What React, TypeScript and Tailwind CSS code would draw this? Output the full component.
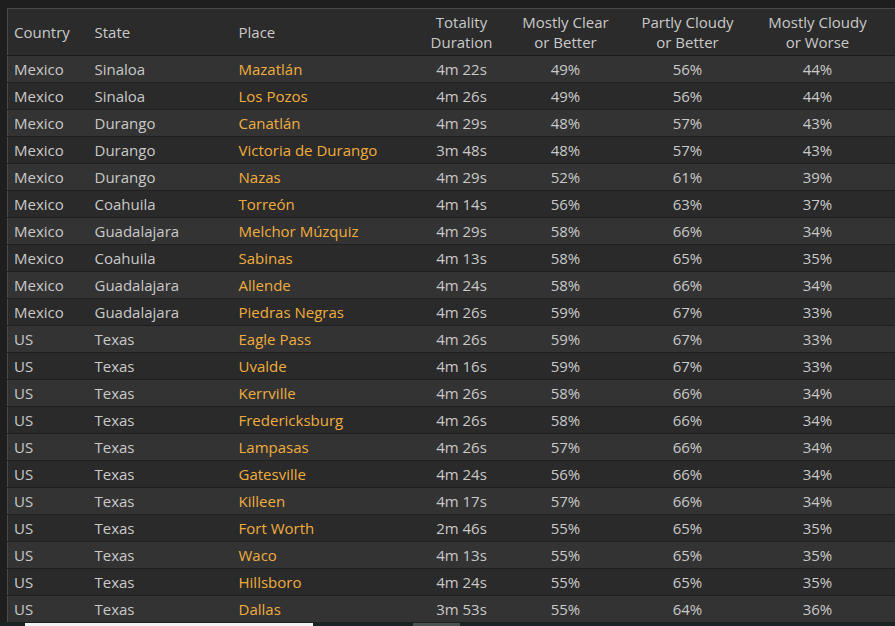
const rows: [string, string, string, string, string, string, string][] = [
  ["Mexico", "Sinaloa", "Mazatlán", "4m 22s", "49%", "56%", "44%"],
  ["Mexico", "Sinaloa", "Los Pozos", "4m 26s", "49%", "56%", "44%"],
  ["Mexico", "Durango", "Canatlán", "4m 29s", "48%", "57%", "43%"],
  ["Mexico", "Durango", "Victoria de Durango", "3m 48s", "48%", "57%", "43%"],
  ["Mexico", "Durango", "Nazas", "4m 29s", "52%", "61%", "39%"],
  ["Mexico", "Coahuila", "Torreón", "4m 14s", "56%", "63%", "37%"],
  ["Mexico", "Guadalajara", "Melchor Múzquiz", "4m 29s", "58%", "66%", "34%"],
  ["Mexico", "Coahuila", "Sabinas", "4m 13s", "58%", "65%", "35%"],
  ["Mexico", "Guadalajara", "Allende", "4m 24s", "58%", "66%", "34%"],
  ["Mexico", "Guadalajara", "Piedras Negras", "4m 26s", "59%", "67%", "33%"],
  ["US", "Texas", "Eagle Pass", "4m 26s", "59%", "67%", "33%"],
  ["US", "Texas", "Uvalde", "4m 16s", "59%", "67%", "33%"],
  ["US", "Texas", "Kerrville", "4m 26s", "58%", "66%", "34%"],
  ["US", "Texas", "Fredericksburg", "4m 26s", "58%", "66%", "34%"],
  ["US", "Texas", "Lampasas", "4m 26s", "57%", "66%", "34%"],
  ["US", "Texas", "Gatesville", "4m 24s", "56%", "66%", "34%"],
  ["US", "Texas", "Killeen", "4m 17s", "57%", "66%", "34%"],
  ["US", "Texas", "Fort Worth", "2m 46s", "55%", "65%", "35%"],
  ["US", "Texas", "Waco", "4m 13s", "55%", "65%", "35%"],
  ["US", "Texas", "Hillsboro", "4m 24s", "55%", "65%", "35%"],
  ["US", "Texas", "Dallas", "3m 53s", "55%", "64%", "36%"],
];

function App() {
  return (
    <div className="w-[895px] h-[626px] overflow-hidden bg-[#1e1e1e] font-['Open_Sans',sans-serif] text-[15px] text-[#c9c9c9]">
      <div className="pt-2 pl-[7px]">
        <table className="table-fixed w-[960px] border-collapse border-l border-t border-[#4a4a4a] bg-[#2b2b2b]">
          <colgroup>
            <col className="w-[81px]" />
            <col className="w-[144px]" />
            <col className="w-[177px]" />
            <col className="w-[104px]" />
            <col className="w-[104px]" />
            <col className="w-[140px]" />
            <col className="w-[120px]" />
            <col />
          </colgroup>
          <thead>
            <tr className="h-[47px] border-b border-[#1c1c1c] leading-5">
              <th className="text-left font-normal pl-[6px]">Country</th>
              <th className="text-left font-normal pl-[6px]">State</th>
              <th className="text-left font-normal pl-[6px]">Place</th>
              <th className="text-center font-normal">Totality<br />Duration</th>
              <th className="text-center font-normal">Mostly Clear<br />or Better</th>
              <th className="text-center font-normal">Partly Cloudy<br />or Better</th>
              <th className="text-center font-normal">Mostly Cloudy<br />or Worse</th>
              <th></th>
            </tr>
          </thead>
          <tbody>
            {rows.map((r, i) => (
              <tr key={i} className={`h-[27px] border-b border-[#1f1f1f] ${i % 2 === 0 ? "bg-[#333333]" : "bg-[#2a2a2a]"}`}>
                <td className="pl-[6px] p-0">{r[0]}</td>
                <td className="pl-[6px] p-0">{r[1]}</td>
                <td className="pl-[6px] p-0 text-[#f0ad3e]">{r[2]}</td>
                <td className="text-center p-0">{r[3]}</td>
                <td className="text-center p-0">{r[4]}</td>
                <td className="text-center p-0">{r[5]}</td>
                <td className="text-center p-0">{r[6]}</td>
                <td></td>
              </tr>
            ))}
          </tbody>
        </table>
      </div>
      <div className="flex h-[3px] bg-[#1a2326]">
        <div className="w-[25px]" />
        <div className="w-[288px] bg-[#f2f2f2]" />
        <div className="w-[100px]" />
        <div className="w-[47px] bg-[#4a5254]" />
      </div>
    </div>
  );
}

export default App;
